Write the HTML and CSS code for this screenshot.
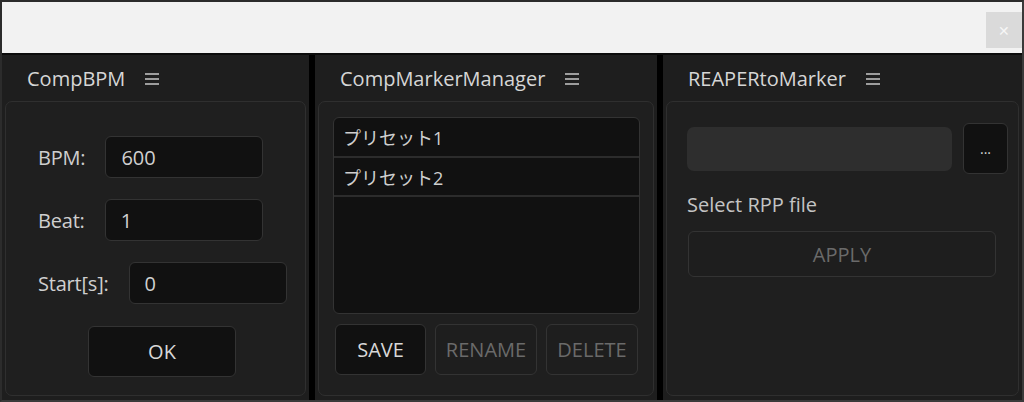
FILE: index.html
```html
<!DOCTYPE html>
<html>
<head>
  <title>Marker Tools</title>
  <link rel="stylesheet" href="styles.css">
</head>
<body>

  <div class="window">
    <div class="titlebar">
      <div class="close">&#x2715;</div>
    </div>

    <div class="panels">
      <!-- CompBPM -->
      <div class="panel">
        <div class="panel-head">
          <span>CompBPM</span>
          <svg class="menu" width="16" height="14" viewBox="0 0 16 14"><path d="M1 2h14M1 7h14M1 12h14" stroke="#c8c8c8" stroke-width="1.6"/></svg>
        </div>
        <div class="box bpm">
          <div class="row"><label>BPM:</label><div class="field">600</div></div>
          <div class="row"><label>Beat:</label><div class="field">1</div></div>
          <div class="row"><label>Start[s]:</label><div class="field">0</div></div>
          <button class="btn ok">OK</button>
        </div>
      </div>

      <!-- CompMarkerManager -->
      <div class="panel">
        <div class="panel-head">
          <span>CompMarkerManager</span>
          <svg class="menu" width="16" height="14" viewBox="0 0 16 14"><path d="M1 2h14M1 7h14M1 12h14" stroke="#c8c8c8" stroke-width="1.6"/></svg>
        </div>
        <div class="box markers">
          <div class="list">
            <div class="item">プリセット1</div>
            <div class="item">プリセット2</div>
          </div>
          <div class="actions">
            <button class="btn save">SAVE</button>
            <button class="btn off rename">RENAME</button>
            <button class="btn off delete">DELETE</button>
          </div>
        </div>
      </div>

      <!-- REAPERtoMarker -->
      <div class="panel">
        <div class="panel-head">
          <span>REAPERtoMarker</span>
          <svg class="menu" width="16" height="14" viewBox="0 0 16 14"><path d="M1 2h14M1 7h14M1 12h14" stroke="#c8c8c8" stroke-width="1.6"/></svg>
        </div>
        <div class="box reaper">
          <div class="file-row">
            <div class="path"></div>
            <button class="btn browse">...</button>
          </div>
          <p class="hint">Select RPP file</p>
          <button class="btn off apply">APPLY</button>
        </div>
      </div>
    </div>
  </div>

</body>
</html>
```

FILE: styles.css
```css
html, body {
  margin: 0;
  padding: 0;
  background: #000;
}

body {
  font-family: "Open Sans", "Noto Sans CJK JP", sans-serif;
  font-size: 20px;
  color: #cfcfcf;
}

.window {
  width: 1024px;
  height: 402px;
  box-sizing: border-box;
  border: 2px solid #2c2c2c;
  border-bottom-color: #3a3a3a;
  border-right-color: #3a3a3a;
  background: #000;
  display: flex;
  flex-direction: column;
}

.titlebar {
  height: 53px;
  box-sizing: border-box;
  background: #f2f2f2;
  border-bottom: 2px solid #0c0c0c;
  display: flex;
  justify-content: flex-end;
  align-items: flex-start;
  padding-top: 10px;
  flex-shrink: 0;
}

.close {
  width: 36px;
  height: 36px;
  background: #dadada;
  color: #f6f6f6;
  font-size: 14px;
  display: flex;
  align-items: center;
  justify-content: center;
}

.panels {
  flex: 1;
  display: grid;
  grid-template-columns: 307px 342px 1fr;
  column-gap: 6px;
}

.panel {
  background: #1e1e1e;
  padding: 0 3px 4px 3px;
  display: flex;
  flex-direction: column;
}

.panel-head {
  height: 46px;
  display: flex;
  align-items: center;
  padding-left: 22px;
  color: #d6d6d6;
  box-sizing: border-box;
  padding-top: 1px;
}

.menu {
  margin-left: 19px;
}

.box {
  flex: 1;
  border: 1px solid #2f2f2f;
  border-radius: 7px;
  background: #1f1f1f;
}

.btn {
  font-family: inherit;
  font-size: 20px;
  background: #111;
  color: #d8d8d8;
  border: 1px solid #333;
  border-radius: 6px;
  padding: 0;
  cursor: pointer;
}

.btn.off {
  background: #1e1e1e;
  color: #6a6a6a;
}

/* CompBPM */
.bpm {
  padding: 34px 0 0 32px;
}

.row {
  display: flex;
  align-items: center;
  gap: 20px;
  margin-bottom: 21px;
}

.row label {
  letter-spacing: -0.2px;
}

.field {
  width: 158px;
  height: 42px;
  box-sizing: border-box;
  background: #111;
  border: 1px solid #333;
  border-radius: 6px;
  padding-left: 15px;
  display: flex;
  align-items: center;
  color: #d0d0d0;
}

.ok {
  width: 148px;
  height: 51px;
  margin-left: 50px;
  margin-top: 1px;
}

/* CompMarkerManager */
.markers {
  padding: 15px 13px 0 14px;
}

.list {
  height: 197px;
  box-sizing: border-box;
  background: #111;
  border: 1px solid #333;
  border-radius: 6px;
}

.item {
  height: 40px;
  box-sizing: border-box;
  border-bottom: 2px solid #2c2c2c;
  padding-left: 9px;
  font-size: 18px;
  display: flex;
  align-items: center;
  color: #cfcfcf;
}

.item + .item {
  height: 39px;
}

.actions {
  display: flex;
  gap: 9px;
  margin: 10px 0 0 2px;
}

.actions .btn {
  height: 51px;
}

.save { width: 91px; }
.rename { width: 102px; }
.delete { width: 92px; }

/* REAPERtoMarker */
.reaper {
  padding: 21px 9px 0 20px;
}

.file-row {
  display: flex;
  align-items: center;
  gap: 11px;
}

.path {
  width: 265px;
  height: 44px;
  background: #2e2e2e;
  border-radius: 7px;
}

.browse {
  width: 45px;
  height: 51px;
  font-size: 14px;
}

.hint {
  margin: 17px 0 0 0;
  color: #c4c4c4;
  line-height: 27px;
}

.apply {
  display: block;
  width: 308px;
  height: 46px;
  margin-top: 13px;
  margin-left: 1px;
}
```
